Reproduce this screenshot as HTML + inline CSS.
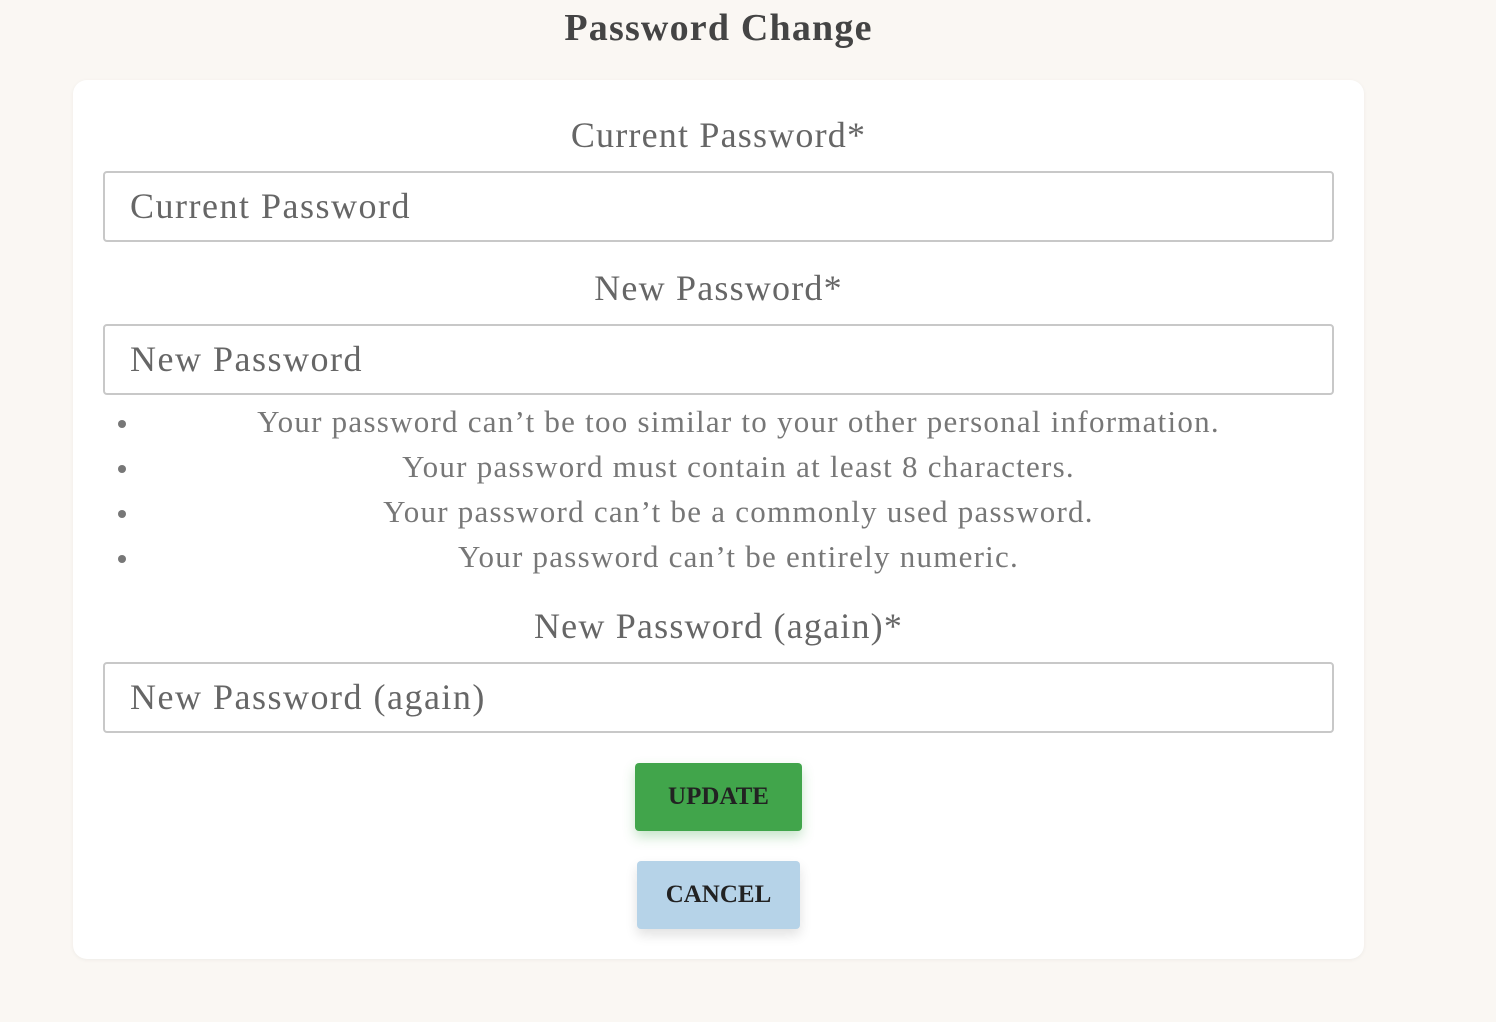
<!DOCTYPE html>
<html><head><style>
body{margin:0;width:1496px;height:1022px;background:#faf7f3;font-family:"Liberation Serif",serif;color:#666;position:relative;overflow:hidden}
h1{position:absolute;left:0;width:1437px;top:6px;margin:0;text-align:center;font-size:38px;color:#444;font-weight:bold;letter-spacing:1.2px}
.card{position:absolute;left:73px;top:80px;width:1291px;height:879px;background:#fff;border-radius:14px;box-shadow:0 1px 4px rgba(0,0,0,.05)}
.lbl{position:absolute;left:0;width:1437px;text-align:center;font-size:36px;color:#666;letter-spacing:1.2px}
.inp{position:absolute;left:103px;width:1227px;height:67px;border:2px solid #c8c8c8;border-radius:4px;box-sizing:content-box;font-size:36px;color:#666;line-height:67px}
.inp span{margin-left:25px;letter-spacing:1.5px}
.hint{position:absolute;left:0;width:1477px;text-align:center;font-size:31px;color:#777;letter-spacing:1.25px}
.dot{position:absolute;left:118px;width:8px;height:8px;border-radius:50%;background:#777}
.btn{position:absolute;text-align:center;font-weight:bold;color:#222;font-size:25px;border-radius:4px}
</style></head><body>
<h1>Password Change</h1>
<div class="card"></div>
<div class="lbl" style="top:114px">Current Password*</div>
<div class="inp" style="top:171px"><span>Current Password</span></div>
<div class="lbl" style="top:267px">New Password*</div>
<div class="inp" style="top:324px"><span>New Password</span></div>
<div class="dot" style="top:420px"></div>
<div class="dot" style="top:465px"></div>
<div class="dot" style="top:510px"></div>
<div class="dot" style="top:555px"></div>
<div class="hint" style="top:404px">Your password can’t be too similar to your other personal information.</div>
<div class="hint" style="top:449px">Your password must contain at least 8 characters.</div>
<div class="hint" style="top:494px">Your password can’t be a commonly used password.</div>
<div class="hint" style="top:539px">Your password can’t be entirely numeric.</div>
<div class="lbl" style="top:605px">New Password (again)*</div>
<div class="inp" style="top:662px"><span>New Password (again)</span></div>
<div class="btn" style="left:635px;top:763px;width:167px;height:68px;line-height:68px;background:#41a54b;box-shadow:0 6px 12px rgba(65,165,75,.3)">UPDATE</div>
<div class="btn" style="left:637px;top:861px;width:163px;height:68px;line-height:68px;background:#b6d3e8;box-shadow:0 6px 12px rgba(0,0,0,.12)">CANCEL</div>
</body></html>
